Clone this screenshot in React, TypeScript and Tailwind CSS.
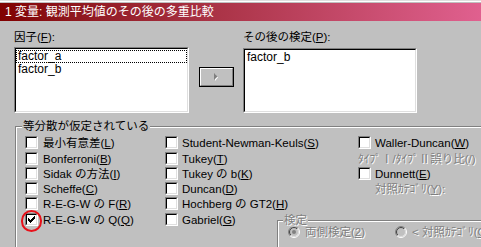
import React from 'react';

const off = "text-[#808080] [text-shadow:1px_1px_0_#fff]";

function Check({ checked, ring }: { checked?: boolean; ring?: boolean }) {
    return (
        <span className="relative block w-[13px] h-[13px] shrink-0 border border-t-[#808080] border-l-[#808080] border-b-white border-r-white">
            <span className="block w-full h-full border border-t-black border-l-black border-b-[#dfdfdf] border-r-[#dfdfdf] bg-white">
                {checked && (
                    <svg width="9" height="9" viewBox="0 0 9 9" className="block">
                        <path
                            d="M1 3h1v3H1zM2 4h1v3H2zM3 5h1v3H3zM4 4h1v3H4zM5 3h1v3H5zM6 2h1v3H6zM7 1h1v3H7z"
                            fill="#000"
                        />
                    </svg>
                )}
            </span>
            {ring && (
                <span className="absolute left-[-5px] top-[-4px] w-[21px] h-[22px] rounded-full border-2 border-[#e8101a]" />
            )}
        </span>
    );
}

function Radio({ on }: { on?: boolean }) {
    return (
        <svg width="12" height="12" viewBox="0 0 12 12" className="block shrink-0">
            <defs>
                <linearGradient id="ro" x1="0" y1="0" x2="1" y2="1">
                    <stop offset="0.45" stopColor="#808080" />
                    <stop offset="0.55" stopColor="#ffffff" />
                </linearGradient>
                <linearGradient id="ri" x1="0" y1="0" x2="1" y2="1">
                    <stop offset="0.45" stopColor="#404040" />
                    <stop offset="0.55" stopColor="#dfdfdf" />
                </linearGradient>
            </defs>
            <circle cx="6" cy="6" r="5.5" fill="none" stroke="url(#ro)" />
            <circle cx="6" cy="6" r="4.5" fill="#c0c0c0" stroke="url(#ri)" />
            {on && <circle cx="6" cy="6" r="2" fill="#808080" />}
        </svg>
    );
}

function ListBox({ items, className }: { items: string[]; className: string }) {
    return (
        <div className={`border border-t-[#808080] border-l-[#808080] border-b-white border-r-white ${className}`}>
            <div className="h-full border border-t-black border-l-black border-b-[#dfdfdf] border-r-[#dfdfdf] bg-white pt-px text-[12px]">
                {items.map((it, i) => (
                    <div
                        key={it}
                        className={
                            i === 0 && items.length > 1
                                ? 'h-[13px] leading-[11px] border border-dotted border-black pl-px'
                                : 'h-[13px] leading-[12px] pl-[2px]'
                        }
                    >
                        {it}
                    </div>
                ))}
            </div>
        </div>
    );
}

function Opt({ label, checked, ring, gap }: { label: React.ReactNode; checked?: boolean; ring?: boolean; gap: string }) {
    return (
        <div className={`flex items-center h-[13px] whitespace-nowrap ${gap}`}>
            <Check checked={checked} ring={ring} />
            <span>{label}</span>
        </div>
    );
}

export default function App() {
    return (
        <div className="w-[481px] h-[247px] overflow-hidden bg-[#c0c0c0] text-black text-[11.5px] leading-[14px] font-['Liberation_Sans','Noto_Sans_CJK_JP',sans-serif] pt-[3px] shadow-[inset_0_1px_0_#dfdfdf,inset_0_2px_0_#fff]">
            <div className="h-[18px] flex items-center px-[5px] bg-linear-to-r from-[#800000] to-[#e0608f] text-white text-[12px] whitespace-nowrap">
                1 変量: 観測平均値のその後の多重比較
            </div>

            <div className="flex items-start pt-[9px] pl-[14px]">
                <div className="w-[175px]">
                    <div className="h-[14px]">
                        因子(<u>F</u>):
                    </div>
                    <ListBox items={['factor_a', 'factor_b']} className="mt-[3px] h-[66px]" />
                </div>
                <div className="ml-[10px] mt-[37px] w-[35px] h-[20px] border border-black">
                    <div className="h-full flex items-center justify-center border border-t-white border-l-white border-b-[#808080] border-r-[#808080]">
                        <svg width="5" height="8" viewBox="0 0 5 8" className="block">
                            <path d="M1 1l3 3.5L1 8z" fill="#fff" />
                            <path d="M0 0l3.5 3.5L0 7z" fill="#808080" />
                        </svg>
                    </div>
                </div>
                <div className="ml-[9px] w-[174px]">
                    <div className="h-[14px]">
                        その後の検定(<u>P</u>):
                    </div>
                    <ListBox items={['factor_b']} className="mt-[4px] h-[65px]" />
                </div>
            </div>

            <div className="relative ml-[15px] mt-[13px] w-[500px] h-[140px] border border-[#808080] shadow-[inset_1px_1px_0_#fff,1px_1px_0_#fff] pl-[9px] pt-[9px]">
                <span className="absolute left-[6px] top-[-8px] px-px bg-[#c0c0c0] whitespace-nowrap">
                    等分散が仮定されている
                </span>
                <div className="grid grid-cols-[140px_193px_200px] grid-rows-[16px_15px_15px_15px_16px_15px]">
                    <Opt gap="gap-[5px]" label={<>最小有意差(<u>L</u>)</>} />
                    <Opt gap="gap-[4px]" label={<>Student-Newman-Keuls(<u>S</u>)</>} />
                    <Opt gap="gap-[4px]" label={<>Waller-Duncan(<u>W</u>)</>} />

                    <Opt gap="gap-[5px]" label={<>Bonferroni(<u>B</u>)</>} />
                    <Opt gap="gap-[4px]" label={<>Tukey(<u>T</u>)</>} />
                    <div className={`h-[13px] flex items-center whitespace-nowrap ${off}`}>
                        ﾀｲﾌﾟⅠ/ﾀｲﾌﾟⅡ誤り比(/)
                    </div>

                    <Opt gap="gap-[5px]" label={<>Sidak の方法(<u>I</u>)</>} />
                    <Opt gap="gap-[4px]" label={<>Tukey の b(<u>K</u>)</>} />
                    <Opt gap="gap-[4px]" label={<>Dunnett(<u>E</u>)</>} />

                    <Opt gap="gap-[5px]" label={<>Scheffe(<u>C</u>)</>} />
                    <Opt gap="gap-[4px]" label={<>Duncan(<u>D</u>)</>} />
                    <div className={`h-[13px] flex items-center pl-[17px] whitespace-nowrap ${off}`}>
                        対照ｶﾃｺﾞﾘ(<u>Y</u>):
                    </div>

                    <Opt gap="gap-[5px]" label={<>R-E-G-W の F(<u>R</u>)</>} />
                    <Opt gap="gap-[4px]" label={<>Hochberg の GT2(<u>H</u>)</>} />
                    <div />

                    <Opt gap="gap-[5px]" checked ring label={<>R-E-G-W の Q(<u>Q</u>)</>} />
                    <Opt gap="gap-[4px]" label={<>Gabriel(<u>G</u>)</>} />
                    <div />
                </div>

                <div className="relative ml-[252px] mt-[-8px] w-[260px] h-[40px] border border-[#808080] shadow-[inset_1px_1px_0_#fff,1px_1px_0_#fff] pl-[10px] pt-[5px]">
                    <span className={`absolute left-[5px] top-[-8px] px-px bg-[#c0c0c0] ${off}`}>検定</span>
                    <div className="flex items-center h-[12px] whitespace-nowrap">
                        <Radio on />
                        <span className={`ml-[5px] ${off}`}>両側検定(<u>2</u>)</span>
                        <span className="ml-[30px]">
                            <Radio />
                        </span>
                        <span className={`ml-[5px] ${off}`}>&lt; 対照ｶﾃｺﾞﾘ(<u>O</u>)</span>
                    </div>
                </div>
            </div>
        </div>
    );
}
